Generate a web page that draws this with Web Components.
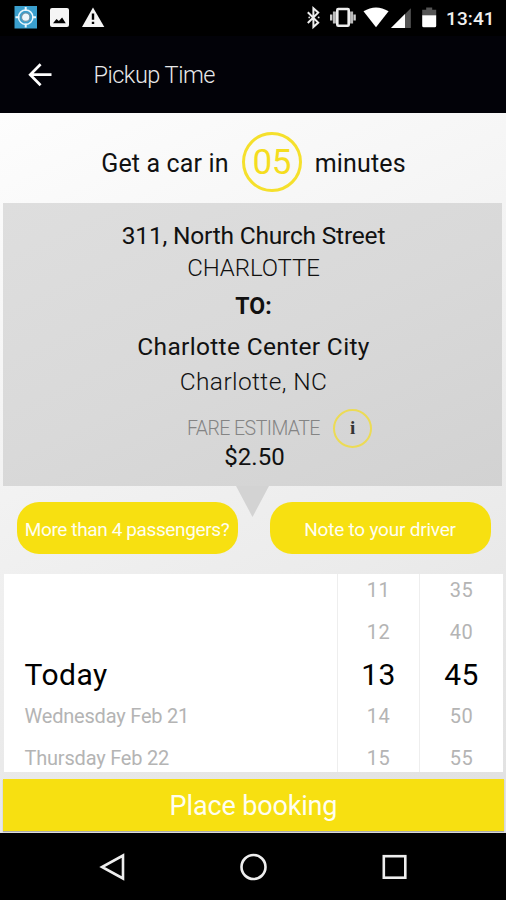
<!DOCTYPE html>
<html lang="en">
<head>
<meta charset="utf-8">
<title>Pickup Time</title>
<style>
    body {
        margin: 0;
        font-family: Roboto, "Noto Sans", sans-serif;
        color: #111;
    }
</style>
</head>
<body>
<booking-screen>
    <status-bar slot="top" time="13:41"></status-bar>
    <app-bar slot="top">Pickup Time</app-bar>
    <eta-line minutes="05"><span>Get a car in</span><span slot="after">minutes</span></eta-line>
    <trip-card>
        <span slot="from">311, North Church Street</span>
        <span slot="from-city">CHARLOTTE</span>
        <span slot="to">Charlotte Center City</span>
        <span slot="to-city">Charlotte, NC</span>
        <span slot="fare">$2.50</span>
    </trip-card>
    <button-row>
        <pill-button style="letter-spacing: -0.38px">More than 4 passengers?</pill-button>
        <pill-button style="letter-spacing: -0.22px">Note to your driver</pill-button>
    </button-row>
    <time-picker>
        <picker-column class="day" values="||Today|Wednesday Feb 21|Thursday Feb 22"></picker-column>
        <picker-column values="11|12|13|14|15"></picker-column>
        <picker-column values="35|40|45|50|55"></picker-column>
    </time-picker>
    <place-button>Place booking</place-button>
    <nav-bar slot="bottom"></nav-bar>
</booking-screen>

<script>
function define(name, html, render) {
    customElements.define(name, class extends HTMLElement {
        constructor() {
            super();
            this.attachShadow({mode: 'open'});
            this.shadowRoot.innerHTML = html;
        }
        connectedCallback() {
            if (render) render(this, this.shadowRoot);
        }
    });
}

define('booking-screen', `
    <style>
        :host {
            display: flex;
            flex-direction: column;
            height: 900px;
            overflow: hidden;
            background: #000;
        }
        main {
            flex: 1;
            display: flex;
            flex-direction: column;
            background: linear-gradient(155deg, #fdfdfd 0%, #f5f5f5 30%, #ebebeb 65%, #e0e0e0 100%);
        }
    </style>
    <slot name="top"></slot>
    <main><slot></slot></main>
    <slot name="bottom"></slot>
`);

define('status-bar', `
    <style>
        :host {
            display: flex;
            align-items: center;
            height: 36px;
            box-sizing: border-box;
            padding: 0 11px 0 14px;
            background: #000;
            color: #f0f0f0;
        }
        svg { display: block; }
        .right { margin-left: auto; }
        time {
            width: 49px;
            margin-left: 8px;
            font-size: 19px;
            font-weight: 500;
            line-height: 37px;
            letter-spacing: 0.1px;
            white-space: nowrap;
        }
    </style>
    <svg width="92" height="36" viewBox="14 0 92 36">
        <rect x="14.5" y="6" width="22.5" height="22.5" fill="#3a9fce"/>
        <path d="M25.7 7v4M25.7 23.5v4M15.5 17.2h4M32 17.2h4" stroke="#e9f6fc" stroke-width="2"/>
        <circle cx="25.7" cy="17.2" r="7.2" fill="none" stroke="#e9f6fc" stroke-width="1.5"/>
        <circle cx="25.7" cy="17.2" r="4.2" fill="#eef6fa" stroke="#6d93a6" stroke-width="1.2"/>
        <rect x="50" y="8" width="19" height="19" rx="2" fill="#f5f5f5"/>
        <path d="M53 23.2l3.5-4.2 2.4 2 3.2-3.6 3.7 5.8z" fill="#000"/>
        <path d="M93 7.5L104.3 27H82z" fill="#f5f5f5"/>
        <path d="M93 13.6v6.2M93 21.7v2.4" stroke="#000" stroke-width="2.4"/>
    </svg>
    <svg class="right" width="132" height="36" viewBox="306 0 132 36">
        <path d="M307.8 12.2l10.4 10.4-4.8 4.4V8.2l4.8 4.4-10.4 10.4" fill="none" stroke="#eee" stroke-width="2"/>
        <path d="M309.2 17.4h.1M318.6 17.4h.1" stroke="#ddd" stroke-width="1.8" stroke-linecap="round"/>
        <rect x="337.3" y="9" width="11.4" height="16.8" rx="1" fill="none" stroke="#eee" stroke-width="2.6"/>
        <path d="M334.4 11.5v12M351.6 11.5v12" stroke="#bbb" stroke-width="3"/>
        <path d="M331.2 14.5v6M354.6 14.5v6" stroke="#ccc" stroke-width="2.4"/>
        <path d="M363.5 11.2Q376 3.6 388.6 11.2L376 27.3z" fill="#fff"/>
        <path d="M410.8 8.2V28H391z" fill="#555"/>
        <path d="M405 14V28H391z" fill="#fff"/>
        <path d="M422.2 15.5V9.8h4V7.6h6v2.2h4v5.7z" fill="#555"/>
        <path d="M422.2 15.2h14v10.6q0 1.5-1.5 1.5h-11q-1.5 0-1.5-1.5z" fill="#fff"/>
    </svg>
    <time></time>
`, (el, root) => {
    root.querySelector('time').textContent = el.getAttribute('time');
});

define('app-bar', `
    <style>
        :host {
            display: flex;
            align-items: center;
            height: 77px;
            box-sizing: border-box;
            padding-left: 28px;
            background: #020208;
            color: #e8e8e8;
            font-size: 23.5px;
            font-weight: 300;
            line-height: 78px;
            letter-spacing: -0.5px;
        }
        svg { margin-right: 40.5px; }
    </style>
    <svg width="25" height="24" viewBox="28 62 25 24">
        <path d="M51.5 73.7H30.5M40.6 63.2L30.2 73.7l10.4 10.5" fill="none" stroke="#fff" stroke-width="2.7"/>
    </svg>
    <span><slot></slot></span>
`);

define('eta-line', `
    <style>
        :host {
            display: flex;
            align-items: center;
            justify-content: center;
            gap: 13px;
            height: 90px;
            box-sizing: border-box;
            padding: 10px 0 0 1px;
            font-size: 25px;
            letter-spacing: 0.15px;
        }
        b {
            box-sizing: border-box;
            width: 60px;
            height: 60px;
            margin-top: -2px;
            border: 3px solid #f5e02c;
            border-radius: 50%;
            color: #f5dd1e;
            font-size: 35px;
            font-weight: 400;
            line-height: 55px;
            text-align: center;
            letter-spacing: -0.5px;
        }
    </style>
    <slot></slot>
    <b></b>
    <slot name="after"></slot>
`, (el, root) => {
    root.querySelector('b').textContent = el.getAttribute('minutes');
});

define('trip-card', `
    <style>
        :host {
            display: block;
            height: 283px;
            margin: 0 4px 0 3px;
            box-sizing: border-box;
            padding: 16px 0 0 2px;
            background: linear-gradient(155deg, #dedede, #d9d9d9 50%, #d2d2d2);
            position: relative;
            text-align: center;
            font-size: 24.5px;
        }
        /* pointer towards the buttons */
        :host::after {
            content: "";
            position: absolute;
            top: 100%;
            left: 233px;
            width: 33px;
            height: 31px;
            background: #d3d3d3;
            clip-path: polygon(0 0, 100% 0, 50% 100%);
        }
        .from { line-height: 33px; letter-spacing: -0.2px; }
        .from-city { line-height: 33px; font-weight: 300; font-size: 24px; letter-spacing: -0.1px; }
        .label { line-height: 43px; font-weight: 700; font-size: 23px; }
        .to { line-height: 38px; letter-spacing: 0.33px; }
        .to-city { line-height: 31px; font-weight: 300; letter-spacing: 0.4px; }
        .fare {
            display: grid;
            grid-template-columns: 1fr auto 1fr;
            align-items: center;
            column-gap: 13px;
            margin-top: 12px;
            height: 39px;
            color: #848484;
            font-size: 19.5px;
            font-weight: 300;
            letter-spacing: -0.55px;
        }
        .info {
            grid-column: 3;
            box-sizing: border-box;
            width: 39px;
            height: 39px;
            border: 2px solid #ecdb55;
            border-radius: 50%;
            color: #333;
            font: 700 19px/34px "Liberation Serif", serif;
        }
        .fare span { grid-column: 2; }
        .price { line-height: 18px; font-size: 24px; padding-left: 2px; }
    </style>
    <div class="from"><slot name="from"></slot></div>
    <div class="from-city"><slot name="from-city"></slot></div>
    <div class="label">TO:</div>
    <div class="to"><slot name="to"></slot></div>
    <div class="to-city"><slot name="to-city"></slot></div>
    <div class="fare"><span>FARE ESTIMATE</span><div class="info">i</div></div>
    <div class="price"><slot name="fare"></slot></div>
`);

define('button-row', `
    <style>
        :host {
            display: grid;
            grid-template-columns: 1fr 1fr;
            gap: 32px;
            margin: 16px 15px 20px 17px;
        }
    </style>
    <slot></slot>
`);

define('pill-button', `
    <style>
        :host {
            display: flex;
            align-items: center;
            justify-content: center;
            height: 52px;
            padding: 2px 1px 0 0;
            box-sizing: border-box;
            border-radius: 22px;
            background: #f7e011;
            color: #fffef0;
            font-size: 19px;
            white-space: nowrap;
        }
    </style>
    <slot></slot>
`);

define('time-picker', `
    <style>
        :host {
            display: grid;
            grid-template-columns: 333px 82px 1fr;
            height: 198px;
            margin: 0 3px 0 4px;
            background: #fff;
            overflow: hidden;
        }
    </style>
    <slot></slot>
`);

define('picker-column', `
    <style>
        :host {
            display: block;
            margin-top: -5px;
            border-left: 1px solid #eee;
            text-align: center;
            letter-spacing: 0.5px;
        }
        :host(.day) {
            padding-left: 20.5px;
            border-left: 0;
            text-align: left;
            letter-spacing: -0.2px;
        }
        div {
            height: 42px;
            line-height: 42px;
            font-size: 20px;
            color: #b4b4b4;
        }
        div.selected {
            line-height: 44px;
            font-size: 30px;
            letter-spacing: 0.5px;
            color: #000;
        }
    </style>
`, (el, root) => {
    el.getAttribute('values').split('|').forEach((value, i) => {
        const row = document.createElement('div');
        row.textContent = value;
        if (i === 2) row.className = 'selected';
        root.appendChild(row);
    });
});

define('place-button', `
    <style>
        :host {
            display: block;
            height: 52px;
            margin: 7px 2px 0 3px;
            background: #f7e011;
            box-shadow: 0 1px 1px #aaa;
            color: #fffef0;
            font-size: 27px;
            line-height: 55px;
            letter-spacing: -0.15px;
            text-align: center;
        }
    </style>
    <slot></slot>
`);

define('nav-bar', `
    <style>
        :host {
            display: flex;
            align-items: center;
            justify-content: center;
            gap: 114px;
            height: 67px;
            background: #000;
        }
        svg { fill: none; stroke: #eee; stroke-width: 2.6; }
    </style>
    <svg width="26" height="28"><path d="M24 2.5v23L3 14z"/></svg>
    <svg width="28" height="28"><circle cx="14.5" cy="14" r="12"/></svg>
    <svg width="26" height="28"><rect x="2.8" y="3.2" width="21.5" height="21.5"/></svg>
`);
</script>
</body>
</html>
